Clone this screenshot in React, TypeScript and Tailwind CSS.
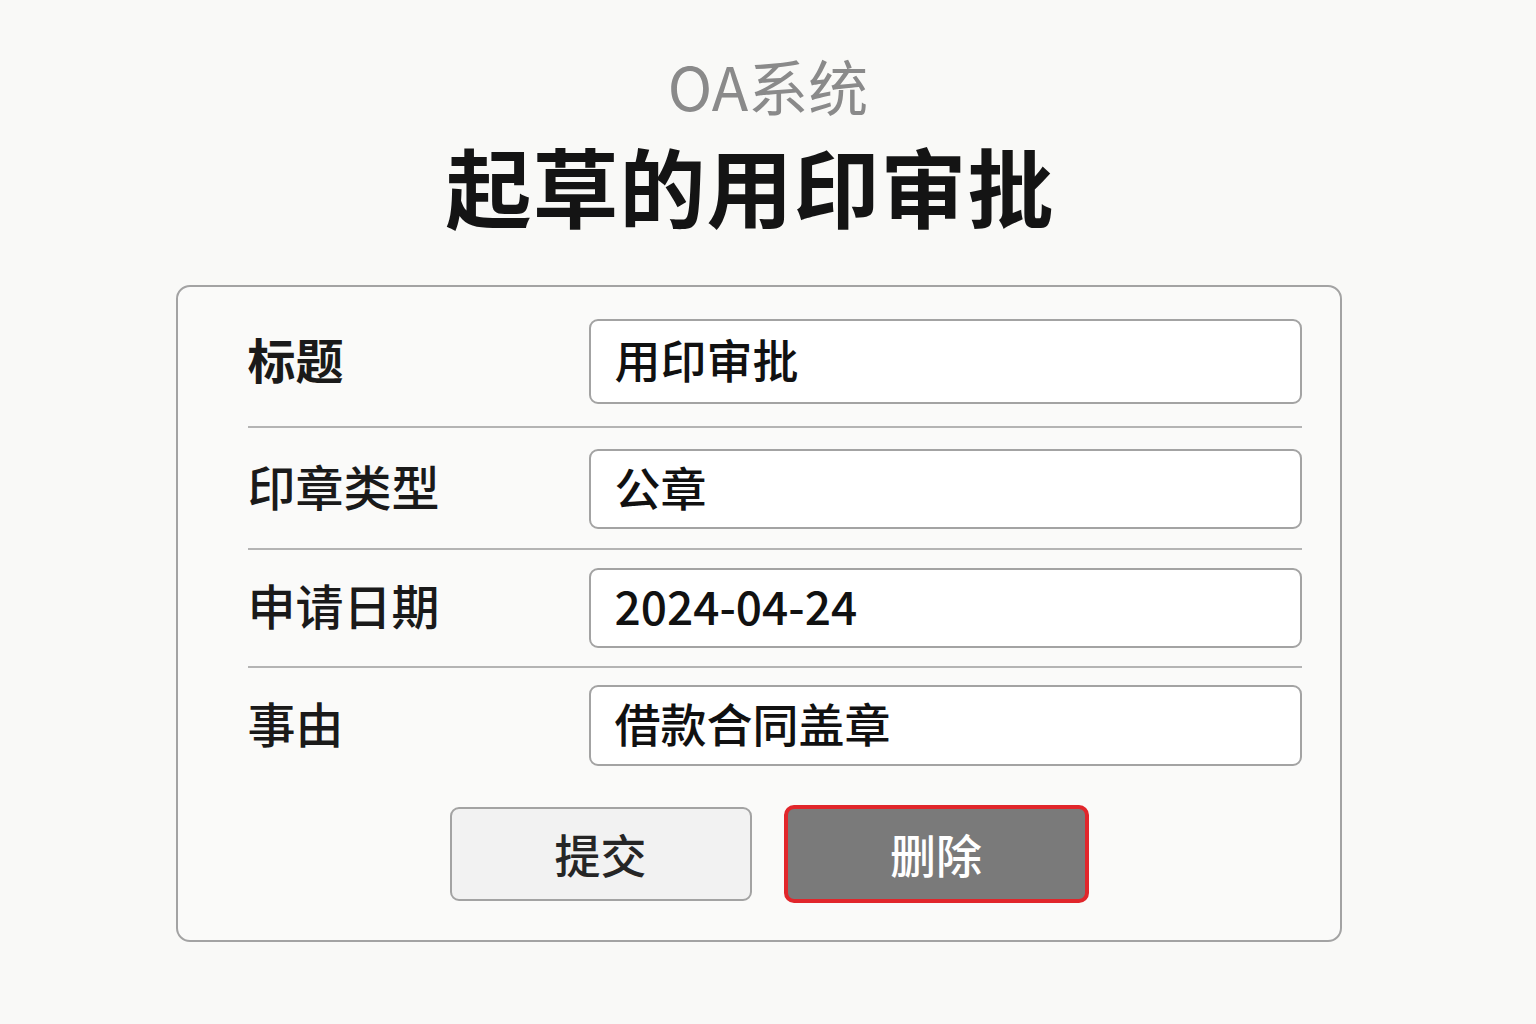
const FONT = '"Noto Sans CJK SC", "Noto Sans", sans-serif'

const rows = [
  { label: '标题', value: '用印审批', h: 'h-[85px]', bold: true, gap: '' },
  { label: '印章类型', value: '公章', h: 'h-[80px]', bold: false, gap: 'mt-[22px] mb-[21px]' },
  { label: '申请日期', value: '2024-04-24', h: 'h-[80px]', bold: false, gap: 'mt-[19px] mb-[18px]' },
  { label: '事由', value: '借款合同盖章', h: 'h-[81px]', bold: false, gap: 'mt-[18px] mb-[17px]' },
]

export default function App() {
  return (
    <div className="min-h-[1024px] w-full bg-[#f9f9f7] flex flex-col items-center" style={{ fontFamily: FONT }}>
      <div className="mt-[55px] text-[60px] leading-[60px] text-[#8a8a8a]">OA系统</div>
      <h1 className="mt-[26px] mr-[36px] text-[86px] leading-[88px] font-bold text-[#141414] tracking-[1px]">起草的用印审批</h1>

      <div className="mt-[56px] mr-[19px] w-[1166px] border-2 border-[#a3a3a3] rounded-[14px] bg-[#fafaf9] pt-[32px] pb-[37px] pl-[70px] pr-[38px]">
        {rows.map((r, i) => (
          <div key={r.label}>
            {i > 0 && <div className={`h-[2px] bg-[#b4b4b4] w-[1054px] ${r.gap}`} />}
            <div className="flex items-center">
              <div
                className={`w-[341px] pb-[8px] text-[48px] leading-none text-[#1a1a1a] ${r.bold ? 'font-bold' : 'font-medium'}`}
              >
                {r.label}
              </div>
              <div
                className={`${r.h} flex-1 flex items-center bg-white border-2 border-[#a3a3a3] rounded-[9px] pl-[24px] pb-[6px] text-[46px] text-[#111] font-medium`}
              >
                {r.value}
              </div>
            </div>
          </div>
        ))}

        <div className="mt-[39px] flex justify-center gap-[32px] pr-[11px]">
          <button className="w-[302px] h-[94px] mt-[2px] pb-[2px] bg-[#f2f2f2] border-2 border-[#a3a3a3] rounded-[9px] text-[46px] font-medium text-[#262626]">
            提交
          </button>
          <button className="w-[305px] h-[98px] pb-[2px] bg-[#7a7a7a] border-[4px] border-[#e1262b] rounded-[10px] text-[46px] font-medium text-white">
            删除
          </button>
        </div>
      </div>
    </div>
  )
}
